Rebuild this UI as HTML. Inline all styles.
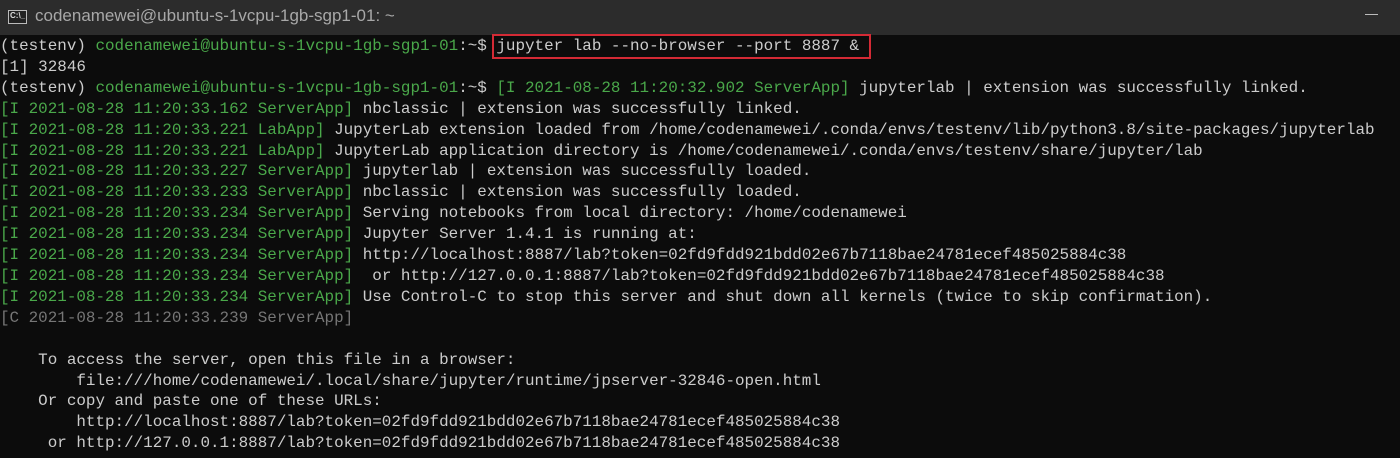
<!DOCTYPE html>
<html><head><meta charset="utf-8"><style>
html,body{margin:0;padding:0;width:1400px;height:458px;overflow:hidden;background:#0c0c0c}
.tb{position:absolute;left:0;top:0;width:1400px;height:35px;background:#2c2c2c}
.tt{position:absolute;left:35px;top:6px;font:17px "Liberation Sans",sans-serif;color:#a8a8a8}
.ic{position:absolute;left:8px;top:10px;width:19px;height:14px;border:1px solid #bbb;background:#222;box-sizing:border-box}
.ic span{position:absolute;left:1px;top:0;font:bold 8px "Liberation Sans",sans-serif;color:#ddd}
.min{position:absolute;left:1365px;top:14px;width:13px;height:1px;background:#bbb}
pre{position:absolute;left:0;top:36px;margin:0;font:15.92px/20.9px "Liberation Mono",monospace;color:#cccccc;white-space:pre}
.g{color:#4aa84a}.d{color:#767676}
.box{position:absolute;left:492px;top:34px;width:379px;height:25px;border:2px solid #d42a35;box-sizing:border-box}
</style></head><body>
<div class="tb"><div class="ic"><span>C:\_</span></div><div class="tt">codenamewei@ubuntu-s-1vcpu-1gb-sgp1-01: ~</div><div class="min"></div></div>
<pre>(testenv) <span class="g">codenamewei@ubuntu-s-1vcpu-1gb-sgp1-01</span>:~$ jupyter lab --no-browser --port 8887 &amp;
[1] 32846
(testenv) <span class="g">codenamewei@ubuntu-s-1vcpu-1gb-sgp1-01</span>:~$ <span class="g">[I 2021-08-28 11:20:32.902 ServerApp]</span> jupyterlab | extension was successfully linked.
<span class="g">[I 2021-08-28 11:20:33.162 ServerApp]</span> nbclassic | extension was successfully linked.
<span class="g">[I 2021-08-28 11:20:33.221 LabApp]</span> JupyterLab extension loaded from /home/codenamewei/.conda/envs/testenv/lib/python3.8/site-packages/jupyterlab
<span class="g">[I 2021-08-28 11:20:33.221 LabApp]</span> JupyterLab application directory is /home/codenamewei/.conda/envs/testenv/share/jupyter/lab
<span class="g">[I 2021-08-28 11:20:33.227 ServerApp]</span> jupyterlab | extension was successfully loaded.
<span class="g">[I 2021-08-28 11:20:33.233 ServerApp]</span> nbclassic | extension was successfully loaded.
<span class="g">[I 2021-08-28 11:20:33.234 ServerApp]</span> Serving notebooks from local directory: /home/codenamewei
<span class="g">[I 2021-08-28 11:20:33.234 ServerApp]</span> Jupyter Server 1.4.1 is running at:
<span class="g">[I 2021-08-28 11:20:33.234 ServerApp]</span> http://localhost:8887/lab?token=02fd9fdd921bdd02e67b7118bae24781ecef485025884c38
<span class="g">[I 2021-08-28 11:20:33.234 ServerApp]</span>  or http://127.0.0.1:8887/lab?token=02fd9fdd921bdd02e67b7118bae24781ecef485025884c38
<span class="g">[I 2021-08-28 11:20:33.234 ServerApp]</span> Use Control-C to stop this server and shut down all kernels (twice to skip confirmation).
<span class="d">[C 2021-08-28 11:20:33.239 ServerApp]</span>

    To access the server, open this file in a browser:
        file:///home/codenamewei/.local/share/jupyter/runtime/jpserver-32846-open.html
    Or copy and paste one of these URLs:
        http://localhost:8887/lab?token=02fd9fdd921bdd02e67b7118bae24781ecef485025884c38
     or http://127.0.0.1:8887/lab?token=02fd9fdd921bdd02e67b7118bae24781ecef485025884c38</pre>
<div class="box"></div>
</body></html>
